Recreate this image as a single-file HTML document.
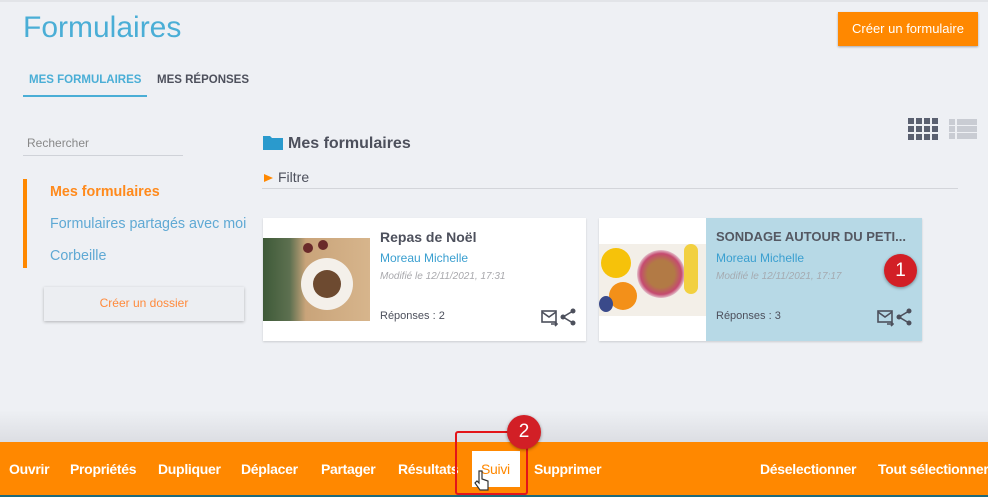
<!DOCTYPE html>
<html><head><meta charset="utf-8"><style>
*{box-sizing:border-box;margin:0;padding:0}
body{width:988px;height:497px;overflow:hidden;background:#eef0f4;font-family:"Liberation Sans",Arial,sans-serif;position:relative}
.a{position:absolute;white-space:nowrap}
.nav span{position:absolute;top:0;color:#fff;font-size:14px;font-weight:bold;letter-spacing:-0.3px}
</style></head><body>
<div class="a" style="left:0;top:0;width:988px;height:2px;background:#e2e4e8"></div>
<div class="a" style="left:23px;top:11px;font-size:30px;color:#4aaed6">Formulaires</div>
<div class="a" style="left:838px;top:12px;width:140px;height:34px;background:#ff8800;color:#fff;font-size:13px;line-height:33px;text-align:center;box-shadow:0 1px 2px rgba(0,0,0,.3)">Créer un formulaire</div>
<div class="a" style="left:29px;top:74px;font-size:11.5px;font-weight:bold;color:#4aaed6">MES FORMULAIRES</div>
<div class="a" style="left:157px;top:74px;font-size:11.5px;font-weight:bold;color:#4d505c">MES RÉPONSES</div>
<div class="a" style="left:23px;top:95px;width:124px;height:2px;background:#4aaed6"></div>
<div class="a" style="left:27px;top:136px;font-size:12px;color:#888">Rechercher</div>
<div class="a" style="left:23px;top:155px;width:160px;height:1px;background:#cfd2d8"></div>
<div class="a" style="left:23px;top:179px;width:4px;height:89px;background:#ff8800"></div>
<div class="a" style="left:50px;top:184px;font-size:14.3px;font-weight:bold;color:#ff8a1c">Mes formulaires</div>
<div class="a" style="left:50px;top:216px;font-size:14.3px;color:#5fa9d4">Formulaires partagés avec moi</div>
<div class="a" style="left:50px;top:248px;font-size:14.3px;color:#5fa9d4">Corbeille</div>
<div class="a" style="left:44px;top:287px;width:200px;height:34px;background:#eceef2;box-shadow:0 1px 3px rgba(0,0,0,.25);color:#ff8a3c;font-size:12px;text-align:center;line-height:33px">Créer un dossier</div>
<svg class="a" style="left:263px;top:134px" width="20" height="16"><path d="M0 2h7l2 2h11v12H0z" fill="#2a9acd"/></svg>
<div class="a" style="left:288px;top:135px;font-size:16px;font-weight:bold;color:#4d505c">Mes formulaires</div>
<svg class="a" style="left:264px;top:173px" width="10" height="10"><path d="M0 1l9 4-9 4z" fill="#ff8800"/></svg>
<div class="a" style="left:278px;top:169px;font-size:14px;color:#4d505c">Filtre</div>
<div class="a" style="left:262px;top:188px;width:696px;height:1px;background:#d3d5da"></div>
<svg class="a" style="left:908px;top:118px" width="70" height="22">
<g fill="#5a6070"><rect x="0" y="0" width="6" height="6"/><rect x="8" y="0" width="6" height="6"/><rect x="16" y="0" width="6" height="6"/><rect x="24" y="0" width="6" height="6"/><rect x="0" y="8" width="6" height="6"/><rect x="8" y="8" width="6" height="6"/><rect x="16" y="8" width="6" height="6"/><rect x="24" y="8" width="6" height="6"/><rect x="0" y="16" width="6" height="6"/><rect x="8" y="16" width="6" height="6"/><rect x="16" y="16" width="6" height="6"/><rect x="24" y="16" width="6" height="6"/></g>
<g fill="#c9ccd3"><rect x="41" y="1" width="6" height="6"/><rect x="49" y="1" width="20" height="6"/><rect x="41" y="8" width="6" height="6"/><rect x="49" y="8" width="20" height="6"/><rect x="41" y="15" width="6" height="6"/><rect x="49" y="15" width="20" height="6"/></g></svg>
<!-- card 1 -->
<div class="a" style="left:263px;top:218px;width:323px;height:123px;background:#fff;box-shadow:0 1px 2px rgba(0,0,0,.15)"></div>
<div class="a" style="left:263px;top:238px;width:107px;height:83px;background:linear-gradient(90deg,#3e5a38 0,#5d7050 25%,#c9a47a 40%,#d7b58c 100%)">
<div class="a" style="left:38px;top:20px;width:52px;height:52px;border-radius:50%;background:#f4f0ea"></div>
<div class="a" style="left:50px;top:32px;width:28px;height:28px;border-radius:50%;background:#6d4a30"></div>
<div class="a" style="left:40px;top:5px;width:10px;height:10px;border-radius:50%;background:#6a2a2a"></div>
<div class="a" style="left:55px;top:2px;width:10px;height:10px;border-radius:50%;background:#6a2a2a"></div></div>
<div class="a" style="left:380px;top:229px;font-size:14px;font-weight:bold;color:#4d505c">Repas de Noël</div>
<div class="a" style="left:380px;top:251px;font-size:12px;color:#3a9fd0">Moreau Michelle</div>
<div class="a" style="left:380px;top:271px;font-size:10px;font-style:italic;color:#a8a8ac">Modifié le 12/11/2021, 17:31</div>
<div class="a" style="left:380px;top:310px;font-size:11px;color:#4d505c">Réponses : 2</div>
<svg class="a" style="left:541px;top:308px" width="36" height="20"><g stroke="#4d505c" stroke-width="1.6" fill="none"><rect x="1" y="3" width="14" height="11"/><path d="M1 4l7 5 7-5M10 16h6M14 14l2 2-2 2"/></g><g fill="#4d505c"><circle cx="32" cy="3" r="2.5"/><circle cx="22" cy="9" r="2.5"/><circle cx="32" cy="15" r="2.5"/></g><path d="M32 3L22 9l10 6" stroke="#4d505c" stroke-width="1.6" fill="none"/></svg>
<!-- card 2 -->
<div class="a" style="left:599px;top:218px;width:323px;height:123px;background:#fff;box-shadow:0 1px 2px rgba(0,0,0,.15)"></div>
<div class="a" style="left:706px;top:218px;width:216px;height:123px;background:#b7d9e6"></div>
<div class="a" style="left:599px;top:244px;width:107px;height:72px;background:#f3efe8;overflow:hidden">
<div class="a" style="left:2px;top:4px;width:30px;height:30px;border-radius:50%;background:#f6c20a"></div>
<div class="a" style="left:38px;top:6px;width:48px;height:48px;border-radius:50%;background:radial-gradient(#b27a45 40%,#c54a70 60%,#eee 75%)"></div>
<div class="a" style="left:10px;top:38px;width:28px;height:28px;border-radius:50%;background:#f39019"></div>
<div class="a" style="left:85px;top:0;width:14px;height:50px;border-radius:8px;background:#f2d040"></div>
<div class="a" style="left:0;top:52px;width:14px;height:16px;border-radius:50%;background:#3a4a8a"></div></div>
<div class="a" style="left:716px;top:229px;font-size:13px;font-weight:bold;color:#545862">SONDAGE AUTOUR DU PETI...</div>
<div class="a" style="left:716px;top:251px;font-size:12px;color:#3a9fd0">Moreau Michelle</div>
<div class="a" style="left:716px;top:271px;font-size:10px;font-style:italic;color:#a5aab0">Modifié le 12/11/2021, 17:17</div>
<div class="a" style="left:716px;top:310px;font-size:11px;color:#4d505c">Réponses : 3</div>
<svg class="a" style="left:877px;top:308px" width="36" height="20"><g stroke="#4d505c" stroke-width="1.6" fill="none"><rect x="1" y="3" width="14" height="11"/><path d="M1 4l7 5 7-5M10 16h6M14 14l2 2-2 2"/></g><g fill="#4d505c"><circle cx="32" cy="3" r="2.5"/><circle cx="22" cy="9" r="2.5"/><circle cx="32" cy="15" r="2.5"/></g><path d="M32 3L22 9l10 6" stroke="#4d505c" stroke-width="1.6" fill="none"/></svg>
<div class="a" style="left:884px;top:254px;width:33px;height:33px;border-radius:50%;background:#d21f26;color:#fff;font-size:19px;text-align:center;line-height:33px;box-shadow:0 1px 3px rgba(0,0,0,.4)">1</div>
<!-- bottom -->
<div class="a" style="left:0;top:410px;width:988px;height:32px;background:linear-gradient(#eef0f4,#dcdee3)"></div>
<div class="a" style="left:0;top:442px;width:988px;height:53px;background:#ff8800"></div>
<div class="a" style="left:0;top:495px;width:988px;height:2px;background:#1f6a7a"></div>
<div class="a" style="left:472px;top:451px;width:48px;height:36px;background:#fff"></div>
<div class="a nav" style="left:0;top:461px;width:988px;height:20px">
<span style="left:9px">Ouvrir</span><span style="left:70px">Propriétés</span><span style="left:158px">Dupliquer</span><span style="left:241px">Déplacer</span><span style="left:321px">Partager</span><span style="left:398px">Résultats</span><span style="left:481px;color:#ff8800;font-weight:normal">Suivi</span><span style="left:534px">Supprimer</span><span style="left:760px">Déselectionner</span><span style="left:878px">Tout sélectionner</span></div>
<div class="a" style="left:455px;top:431px;width:73px;height:64px;border:2px solid #e3151a;border-radius:3px"></div>
<div class="a" style="left:507px;top:415px;width:34px;height:34px;border-radius:50%;background:#d21f26;color:#fff;font-size:19px;text-align:center;line-height:34px;box-shadow:0 1px 3px rgba(0,0,0,.4)">2</div>
<svg class="a" style="left:474px;top:470px" width="16" height="22"><path d="M5 1v12l-2-2-2 2 5 7h8v-9l-3-1-3-1V1z" fill="#fff" stroke="#333" stroke-width="1.2"/></svg>
</body></html>
